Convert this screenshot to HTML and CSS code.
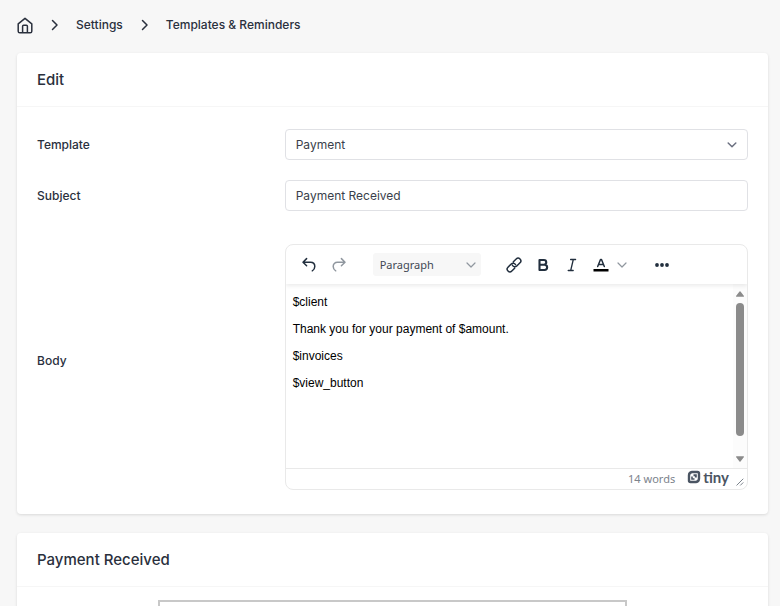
FILE: index.html
```html
<!DOCTYPE html>
<html lang="en">
<head>
    <meta charset="UTF-8">
    <meta name="viewport" content="width=device-width, initial-scale=1.0">
    <title>Templates &amp; Reminders</title>
    <link rel="stylesheet" href="styles.css">
</head>
<body>
    <nav class="breadcrumb" aria-label="Breadcrumb">
        <a href="#" class="home" aria-label="Home">
            <svg width="16" height="17" viewBox="0 0 16 17"><path d="M1.2 6.8 8 1.3l6.8 5.5v7.4a1.6 1.6 0 0 1-1.6 1.6H2.8a1.6 1.6 0 0 1-1.6-1.6zM5.6 15.6V9.2a1 1 0 0 1 1-1h2.8a1 1 0 0 1 1 1v6.4"/></svg>
        </a>
        <svg class="sep" width="8" height="12" viewBox="0 0 8 12"><path d="M1.5 1.5 6 6 1.5 10.5"/></svg>
        <a href="#">Settings</a>
        <svg class="sep" width="8" height="12" viewBox="0 0 8 12"><path d="M1.5 1.5 6 6 1.5 10.5"/></svg>
        <a href="#">Templates &amp; Reminders</a>
    </nav>

    <main>
        <section class="card">
            <h2 class="card-header">Edit</h2>
            <div class="card-body">
                <div class="row">
                    <label for="template">Template</label>
                    <div class="select-wrap">
                        <select id="template" class="field">
                            <option>Payment</option>
                        </select>
                        <svg class="chevron" width="10" height="6" viewBox="0 0 10 6"><path d="M1.2 1 5 4.7 8.8 1"/></svg>
                    </div>
                </div>
                <div class="row">
                    <label for="subject">Subject</label>
                    <input id="subject" class="field" type="text" value="Payment Received">
                </div>
                <div class="row body-row">
                    <label for="body">Body</label>
                    <div class="editor">
                        <div class="toolbar">
                            <button type="button" class="tool" aria-label="Undo">
                                <svg width="16" height="16" viewBox="0 0 16 16"><path d="M5.6 1.6 2 5.2l3.6 3.6M2.2 5.2h7.3c2.7 0 4.3 1.8 4.3 4.3 0 2-.9 3.4-2.5 4.3"/></svg>
                            </button>
                            <button type="button" class="tool muted" aria-label="Redo">
                                <svg width="16" height="16" viewBox="0 0 16 16"><path d="M10.4 1.6 14 5.2l-3.6 3.6M13.8 5.2H6.5C3.8 5.2 2.2 7 2.2 9.5c0 2 .9 3.4 2.5 4.3"/></svg>
                            </button>
                            <div class="select-wrap format">
                                <select aria-label="Block format">
                                    <option>Paragraph</option>
                                </select>
                                <svg class="chevron" width="10" height="6" viewBox="0 0 10 6"><path d="M1 1l4 4 4-4"/></svg>
                            </div>
                            <button type="button" class="tool" aria-label="Link">
                                <svg width="18" height="16" viewBox="-1 0 18 16"><g transform="rotate(-45 8 8)"><path d="M6.2 10.7H2.2a2.7 2.7 0 0 1 0-5.4h4.6a2.7 2.7 0 0 1 2.5 3.6M9.8 5.3h4a2.7 2.7 0 0 1 0 5.4H9.2a2.7 2.7 0 0 1-2.5-3.6"/></g></svg>
                            </button>
                            <button type="button" class="tool" aria-label="Bold">
                                <svg width="12" height="14" viewBox="0 0 12 14"><path class="heavy" d="M2.500 2h4.400a2.300 2.300 0 0 1 0 4.700H2.500zM2.500 6.700h5a2.600 2.600 0 0 1 0 5.300h-5z"/></svg>
                            </button>
                            <button type="button" class="tool" aria-label="Italic">
                                <svg class="thin" width="12" height="14" viewBox="0 0 12 14"><path d="M4.600 1.500h5M2.200 12.500h5M7.300 1.500 4.700 12.500"/></svg>
                            </button>
                            <div class="color">
                                <button type="button" class="tool" aria-label="Text color">
                                    <svg width="16" height="16" viewBox="0 0 16 16"><path d="M4.700 9.500 7.500 2.500h1L11.300 9.500M5.700 7.400h4.600"/><path class="bar" d="M.5 12h15v2.500H.5z"/></svg>
                                </button>
                                <button type="button" class="tool" aria-label="Text color menu">
                                    <svg class="caret" width="10" height="6" viewBox="0 0 10 6"><path d="M1 1l4 4 4-4"/></svg>
                                </button>
                            </div>
                            <button type="button" class="tool more" aria-label="More">
                                <svg width="14" height="4" viewBox="0 0 14 4"><circle cx="2" cy="2" r="1.900"/><circle cx="7" cy="2" r="1.900"/><circle cx="12" cy="2" r="1.900"/></svg>
                            </button>
                        </div>
                        <div class="edit-area">
                            <textarea id="body" spellcheck="false">$client
Thank you for your payment of $amount.
$invoices
$view_button</textarea>
                            <div class="scrollbar" aria-hidden="true">
                                <svg width="8" height="6" viewBox="0 0 8 6"><path d="M.8 5.800a.6.6 0 0 1-.6-1L3.500.6a.6.6 0 0 1 1 0l3.300 4.200a.6.6 0 0 1-.6 1z"/></svg>
                                <span class="thumb"></span>
                                <svg class="down" width="8" height="6" viewBox="0 0 8 6"><path d="M.8.200a.6.6 0 0 0-.6 1l3.300 4.200a.6.6 0 0 0 1 0l3.300-4.200a.6.6 0 0 0-.6-1z"/></svg>
                            </div>
                        </div>
                        <div class="statusbar">
                            <span>14 words</span>
                            <a href="#" class="tiny">
                                <svg width="14" height="14" viewBox="0 0 14 14"><path class="frame" d="M5 2h5.500A1.500 1.500 0 0 1 12 3.500V8.500A3.500 3.500 0 0 1 9 12H3.500A1.500 1.500 0 0 1 2 10.500V5.500A3.500 3.500 0 0 1 5 2z"/><path d="M6.500 4.300h3.300v3.300H7.900V6.200H6.500zM4.200 6.500h1.600v1.700h1.700v1.600H4.200z"/></svg>
                                <span>tiny</span>
                            </a>
                            <svg class="resize" width="8" height="8" viewBox="0 0 8 8"><path d="M.8 7.200 7 1M4.500 7.200 7 4.700"/></svg>
                        </div>
                    </div>
                </div>
            </div>
        </section>

        <section class="card">
            <h2 class="card-header">Payment Received</h2>
            <div class="preview-wrap">
                <div class="preview"></div>
            </div>
        </section>
    </main>
</body>
</html>
```

FILE: styles.css
```css
* {
    box-sizing: border-box;
}
body {
    margin: 0;
    height: 100vh;
    overflow: hidden;
    background: #f7f7f7;
    color: #2a303d;
    font-family: Inter, sans-serif;
    font-size: 12px;
    line-height: 20px;
}
a {
    color: inherit;
    text-decoration: none;
}
svg {
    display: block;
    flex: none;
    fill: none;
    stroke: currentColor;
    stroke-width: 1.5;
    stroke-linecap: round;
    stroke-linejoin: round;
}
button,
select,
input,
textarea {
    font: inherit;
    color: inherit;
    margin: 0;
}
.breadcrumb {
    display: flex;
    align-items: center;
    gap: 18px;
    padding: 15px 17px 18px;
    font-weight: 500;
}
.sep {
    margin-right: -1px;
}
main {
    display: flex;
    flex-direction: column;
    gap: 19px;
    padding: 0 12px 0 17px;
}
.card {
    background: #fff;
    border-radius: 4px;
    box-shadow: 0 1px 3px rgba(0,0,0,0.12);
}
.card-header {
    margin: 0;
    padding: 16px 20px;
    border-bottom: 1px solid #f6f6f6;
    font-size: 15px;
    line-height: 21px;
    font-weight: 500;
}
.card-body {
    display: flex;
    flex-direction: column;
    gap: 20px;
    padding: 22px 20px 24px;
}
.row {
    display: grid;
    grid-template-columns: 1fr 2fr;
    gap: 16px;
    align-items: center;
}
.row > label {
    font-weight: 500;
}
.body-row {
    padding-top: 13px;
}
.body-row > label {
    margin-top: -13px;
}
.field {
    display: block;
    width: 100%;
    height: 31px;
    padding: 0 10px;
    background: #fff;
    border: 1px solid #e0e1e5;
    border-radius: 4px;
    appearance: none;
    color: #3a3f4b;
}
.select-wrap {
    position: relative;
}
.chevron {
    position: absolute;
    right: 11px;
    top: 50%;
    margin-top: -3px;
    color: #6b7080;
    pointer-events: none;
}

/* Rich text editor */
.editor {
    border: 1px solid #e9e9e9;
    border-radius: 8px;
    overflow: hidden;
}
.toolbar {
    position: relative;
    display: flex;
    align-items: center;
    height: 39px;
    padding: 0 9px;
    color: #222f3e;
    box-shadow: 0 2px 4px rgba(0,0,0,0.08);
}
.tool {
    display: flex;
    align-items: center;
    justify-content: center;
    width: 29px;
    height: 24px;
    padding: 0;
    border: none;
    background: none;
    cursor: pointer;
}
.muted {
    color: #90979f;
    margin-left: 1px;
}
.thin {
    stroke-width: 1.3;
}
.heavy {
    stroke-width: 2.1;
}
.bar {
    fill: #000;
    stroke: none;
}
.format {
    width: 108px;
    margin: 0 19px;
}
.format select {
    display: block;
    width: 100%;
    height: 23px;
    padding: 0 7px;
    border: none;
    border-radius: 3px;
    background: #f7f7f7;
    appearance: none;
    color: #3f4854;
    font-family: "Noto Sans", sans-serif;
    font-size: 11px;
}
.format .chevron {
    right: 5px;
    color: #90979f;
    stroke-width: 1.2;
}
.color {
    display: flex;
}
.color .tool + .tool {
    width: 12px;
}
.caret {
    color: #90979f;
    stroke-width: 1.2;
}
.more {
    margin-left: 20px;
}
.more svg {
    fill: currentColor;
    stroke: none;
}
.edit-area {
    display: flex;
    height: 184px;
}
.edit-area textarea {
    flex: 1;
    min-width: 0;
    padding: 5px 7px;
    border: none;
    outline: none;
    resize: none;
    overflow: hidden;
    background: none;
    color: #000;
    font-family: "Liberation Sans", Arial, sans-serif;
    font-size: 12px;
    line-height: 27px;
}
.scrollbar {
    display: flex;
    flex-direction: column;
    align-items: center;
    width: 14px;
    padding: 7px 0 6px;
    background: #fcfcfc;
    color: #8b8b8b;
}
.scrollbar svg {
    fill: currentColor;
    stroke: none;
}
.thumb {
    width: 8px;
    height: 133px;
    margin-top: 6px;
    border-radius: 4px;
    background: #8b8b8b;
}
.down {
    margin-top: auto;
}
.statusbar {
    display: flex;
    align-items: center;
    justify-content: flex-end;
    height: 21px;
    padding-right: 3px;
    border-top: 1px solid #e9e9e9;
    color: #7c838c;
    font-family: "Noto Sans", sans-serif;
    font-size: 11px;
}
.tiny {
    display: flex;
    align-items: center;
    gap: 2px;
    margin: 0 7px 4px 12px;
    color: #4b5563;
    font-family: Lato, sans-serif;
    font-size: 15px;
    line-height: 16px;
    font-weight: 700;
}
.tiny svg {
    fill: currentColor;
    stroke: none;
}
.tiny .frame {
    fill: none;
    stroke: currentColor;
    stroke-width: 2.4;
}
.resize {
    align-self: flex-end;
    margin-bottom: 3px;
    stroke-width: 1;
}
.preview-wrap {
    display: flex;
    justify-content: center;
    padding: 13px 20px 20px;
}
.preview {
    width: 66%;
    height: 200px;
    border: 2px solid #c8c8c8;
}
```
